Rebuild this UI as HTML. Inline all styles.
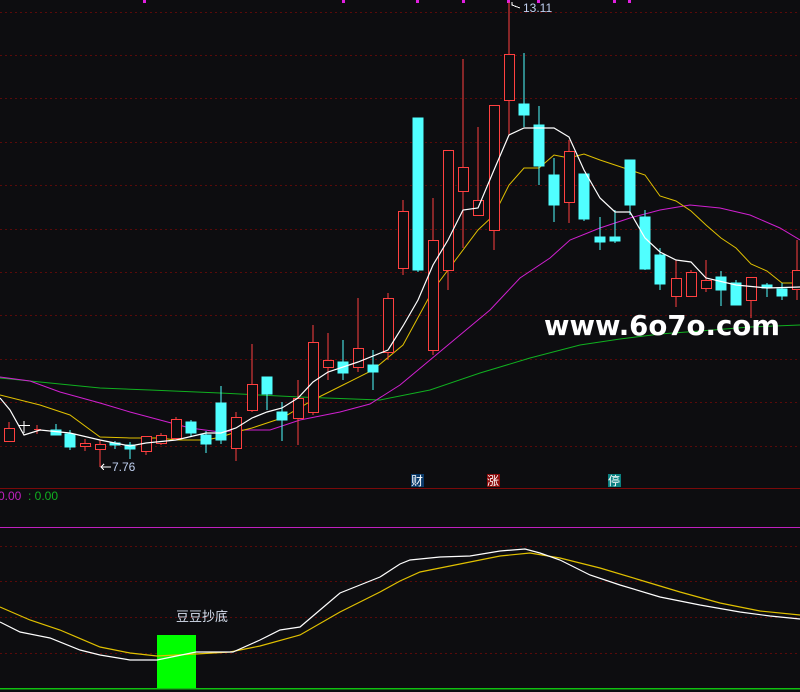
<!DOCTYPE html>
<html><head><meta charset="utf-8"><style>
html,body{margin:0;padding:0;background:#0d0d10;}
svg{display:block}
</style></head><body>
<svg width="800" height="692" xmlns="http://www.w3.org/2000/svg" shape-rendering="crispEdges">
<rect width="800" height="692" fill="#0d0d10"/>
<g stroke="#5a0a0a" stroke-dasharray="2,3" stroke-width="1">
<line x1="0" y1="12.5" x2="800" y2="12.5"/><line x1="0" y1="55.5" x2="800" y2="55.5"/><line x1="0" y1="98.5" x2="800" y2="98.5"/><line x1="0" y1="142.5" x2="800" y2="142.5"/><line x1="0" y1="185.5" x2="800" y2="185.5"/><line x1="0" y1="229.5" x2="800" y2="229.5"/><line x1="0" y1="272.5" x2="800" y2="272.5"/><line x1="0" y1="315.5" x2="800" y2="315.5"/><line x1="0" y1="359.5" x2="800" y2="359.5"/><line x1="0" y1="402.5" x2="800" y2="402.5"/><line x1="0" y1="446.5" x2="800" y2="446.5"/>
<line x1="0" y1="546.5" x2="800" y2="546.5"/><line x1="0" y1="581.5" x2="800" y2="581.5"/><line x1="0" y1="617.5" x2="800" y2="617.5"/><line x1="0" y1="653.5" x2="800" y2="653.5"/>
</g>
<line x1="0" y1="488.5" x2="800" y2="488.5" stroke="#7a0a0a"/>
<line x1="0" y1="527.5" x2="800" y2="527.5" stroke="#c020c0"/>
<line x1="0" y1="688.5" x2="800" y2="688.5" stroke="#10c010" stroke-width="1.5"/>
<g fill="#e020e0"><rect x="143" y="0" width="3" height="3"/><rect x="342" y="0" width="3" height="3"/><rect x="416" y="0" width="3" height="3"/><rect x="462" y="0" width="3" height="3"/><rect x="507" y="0" width="3" height="3"/><rect x="537" y="0" width="3" height="3"/><rect x="613" y="0" width="3" height="3"/><rect x="628" y="0" width="3" height="3"/></g>
<!-- MA lines -->
<g fill="none" stroke-width="1" shape-rendering="auto">
<polyline stroke="#10b020" points="0,378 40,382 100,388 150,390 220,393 300,397 380,400 430,390 480,373 530,358 580,345 620,339 660,334 700,331 750,327 800,325"/>
<polyline stroke="#d020d0" points="0,377 30,381 60,392 100,403 130,412 160,420 190,428 220,432 240,430 270,430 300,420 340,412 370,404 400,385 430,360 460,335 490,310 520,278 550,258 570,240 600,228 630,218 660,210 690,205 720,208 750,215 780,228 800,240"/>
<polyline stroke="#e0c000" points="0,395 40,405 70,415 100,437 130,438 160,438 176,440 206,440 221,437 236,432 252,428 282,418 313,400 343,385 373,370 403,345 433,290 448,270 478,230 494,215 509,185 524,168 539,168 554,155 569,158 584,154 600,160 630,170 645,175 660,196 676,201 691,211 706,225 721,238 736,248 751,264 767,271 782,283 800,283"/>
</g>
<!-- candles -->
<g stroke-width="1.2">
<g stroke="#ff4040" fill="#0d0d10">
<line x1="9" y1="422" x2="9" y2="442"/><rect x="4.5" y="428.5" width="10" height="13"/>
<line x1="34" y1="429.5" x2="41" y2="429.5"/><line x1="37" y1="425" x2="37" y2="434"/>
<line x1="85" y1="439" x2="85" y2="451"/><rect x="80.5" y="443.5" width="10" height="3"/>
<line x1="100" y1="440" x2="100" y2="467"/><rect x="95.5" y="444.5" width="10" height="5"/>
<line x1="146" y1="436" x2="146" y2="455"/><rect x="141.5" y="436.5" width="10" height="15"/>
<line x1="161" y1="433" x2="161" y2="445"/><rect x="156.5" y="435.5" width="10" height="8"/>
<line x1="176" y1="417" x2="176" y2="440"/><rect x="171.5" y="419.5" width="10" height="19"/>
<line x1="236" y1="412" x2="236" y2="461"/><rect x="231.5" y="417.5" width="10" height="31"/>
<line x1="252" y1="344" x2="252" y2="412"/><rect x="247.5" y="384.5" width="10" height="26"/>
<line x1="298" y1="380" x2="298" y2="445"/><rect x="293.5" y="398.5" width="10" height="20"/>
<line x1="313" y1="325" x2="313" y2="415"/><rect x="308.5" y="342.5" width="10" height="70"/>
<line x1="328" y1="333" x2="328" y2="380"/><rect x="323.5" y="360.5" width="10" height="7"/>
<line x1="358" y1="298" x2="358" y2="372"/><rect x="353.5" y="348.5" width="10" height="19"/>
<line x1="388" y1="293" x2="388" y2="360"/><rect x="383.5" y="298.5" width="10" height="54"/>
<line x1="403" y1="200" x2="403" y2="275"/><rect x="398.5" y="211.5" width="10" height="57"/>
<line x1="433" y1="198" x2="433" y2="355"/><rect x="428.5" y="240.5" width="10" height="110"/>
<line x1="448" y1="150" x2="448" y2="290"/><rect x="443.5" y="150.5" width="10" height="120"/>
<line x1="463" y1="59" x2="463" y2="248"/><rect x="458.5" y="167.5" width="10" height="24"/>
<line x1="478" y1="127" x2="478" y2="215"/><rect x="473.5" y="200.5" width="10" height="15"/>
<line x1="494" y1="105" x2="494" y2="250"/><rect x="489.5" y="105.5" width="10" height="125"/>
<line x1="509" y1="2" x2="509" y2="135"/><rect x="504.5" y="54.5" width="10" height="46"/>
<line x1="569" y1="140" x2="569" y2="223"/><rect x="564.5" y="151.5" width="10" height="51"/>
<line x1="676" y1="260" x2="676" y2="307"/><rect x="671.5" y="278.5" width="10" height="18"/>
<line x1="691" y1="270" x2="691" y2="296"/><rect x="686.5" y="272.5" width="10" height="24"/>
<line x1="706" y1="260" x2="706" y2="292"/><rect x="701.5" y="280.5" width="10" height="8"/>
<line x1="751" y1="277" x2="751" y2="318"/><rect x="746.5" y="277.5" width="10" height="23"/>
<line x1="797" y1="240" x2="797" y2="300"/><rect x="792.5" y="270.5" width="10" height="19"/>
</g>
<g stroke="#50ffff" fill="#50ffff">
<line x1="56" y1="424" x2="56" y2="435"/><rect x="51" y="430" width="10" height="5"/>
<line x1="70" y1="430" x2="70" y2="450"/><rect x="65" y="434" width="10" height="13"/>
<line x1="115" y1="441" x2="115" y2="449"/><rect x="110" y="443" width="10" height="2"/>
<line x1="130" y1="442" x2="130" y2="459"/><rect x="125" y="445" width="10" height="4"/>
<line x1="191" y1="420" x2="191" y2="436"/><rect x="186" y="422" width="10" height="11"/>
<line x1="206" y1="431" x2="206" y2="453"/><rect x="201" y="435" width="10" height="9"/>
<line x1="221" y1="386" x2="221" y2="444"/><rect x="216" y="403" width="10" height="37"/>
<line x1="267" y1="377" x2="267" y2="410"/><rect x="262" y="377" width="10" height="17"/>
<line x1="282" y1="402" x2="282" y2="441"/><rect x="277" y="412" width="10" height="8"/>
<line x1="343" y1="340" x2="343" y2="380"/><rect x="338" y="362" width="10" height="11"/>
<line x1="373" y1="350" x2="373" y2="390"/><rect x="368" y="365" width="10" height="7"/>
<line x1="418" y1="118" x2="418" y2="272"/><rect x="413" y="118" width="10" height="152"/>
<line x1="524" y1="53" x2="524" y2="127"/><rect x="519" y="104" width="10" height="11"/>
<line x1="539" y1="106" x2="539" y2="185"/><rect x="534" y="125" width="10" height="41"/>
<line x1="554" y1="158" x2="554" y2="222"/><rect x="549" y="175" width="10" height="30"/>
<line x1="584" y1="174" x2="584" y2="221"/><rect x="579" y="174" width="10" height="45"/>
<line x1="600" y1="217" x2="600" y2="250"/><rect x="595" y="237" width="10" height="5"/>
<line x1="615" y1="210" x2="615" y2="243"/><rect x="610" y="237" width="10" height="4"/>
<line x1="630" y1="160" x2="630" y2="215"/><rect x="625" y="160" width="10" height="45"/>
<line x1="645" y1="210" x2="645" y2="270"/><rect x="640" y="217" width="10" height="52"/>
<line x1="660" y1="248" x2="660" y2="290"/><rect x="655" y="255" width="10" height="29"/>
<line x1="721" y1="271" x2="721" y2="306"/><rect x="716" y="277" width="10" height="13"/>
<line x1="736" y1="280" x2="736" y2="305"/><rect x="731" y="283" width="10" height="22"/>
<line x1="767" y1="283" x2="767" y2="297"/><rect x="762" y="285" width="10" height="3"/>
<line x1="782" y1="283" x2="782" y2="300"/><rect x="777" y="289" width="10" height="7"/>
</g>
<g stroke="#ffffff"><line x1="19" y1="425.5" x2="30" y2="425.5"/><line x1="24" y1="421" x2="24" y2="433"/></g>
</g>
<polyline fill="none" stroke="#ffffff" stroke-width="1.2" shape-rendering="auto" points="0,398 10,410 24,435 40,430 70,433 100,440 130,446 146,443 176,440 206,433 221,433 236,428 252,418 267,412 282,408 298,398 313,382 328,372 358,362 388,350 403,326 418,300 433,265 448,240 463,210 478,208 494,170 509,135 524,128 554,128 569,137 584,170 600,198 615,212 630,212 645,238 660,252 676,260 691,262 706,278 736,285 767,288 800,287"/>
<!-- labels -->
<g font-family="Liberation Sans, sans-serif" font-size="12">
<text x="523" y="12" fill="#c0d0f0">13.11</text>
<polyline points="520,8 512,5 512,2" fill="none" stroke="#fff"/>
<text x="112" y="471" fill="#c0d0f0">7.76</text>
<line x1="101" y1="467" x2="111" y2="467" stroke="#fff"/><polyline points="104,464 101,467 104,470" fill="none" stroke="#fff"/>
<text x="-2" y="500" fill="#c020c0">0.00</text><text x="28" y="500" fill="#10b020">: 0.00</text>
</g>
<rect x="411" y="474" width="13" height="13" fill="#0a3a6a"/><rect x="487" y="474" width="13" height="13" fill="#8a0a0a"/><rect x="608" y="474" width="13" height="13" fill="#0a8080"/>
<g font-family="Liberation Sans, Noto Sans CJK SC, sans-serif" font-size="12" fill="#fff">
<text x="411" y="485">财</text><text x="487" y="485">涨</text><text x="608" y="485">停</text>
</g>
<text x="544" y="335" font-family="DejaVu Sans, sans-serif" font-weight="bold" font-size="28" fill="#fff" textLength="236" lengthAdjust="spacingAndGlyphs">www.6o7o.com</text>
<!-- lower indicator -->
<rect x="157" y="635" width="39" height="53" fill="#00ff00"/>
<g fill="none" stroke-width="1.2" shape-rendering="auto">
<polyline stroke="#e0c000" points="0,607 30,620 60,630 100,647 130,653 157,656 196,654 230,652 260,646 300,635 340,612 380,592 400,581 420,572 460,564 500,556 530,553 560,558 600,568 640,580 680,592 720,603 760,611 800,615"/>
<polyline stroke="#ffffff" points="0,622 20,632 50,638 80,650 100,655 130,660 157,660 196,652 215,652 233,652 260,640 280,630 300,627 320,610 340,593 360,585 380,577 400,564 410,560 440,557 470,556 500,551 525,549 540,553 560,560 590,575 620,585 660,597 700,605 740,612 770,616 800,619"/>
</g>
<text x="176" y="621" font-family="Liberation Sans, Noto Sans CJK SC, sans-serif" font-size="13" fill="#d8e0f0">豆豆抄底</text>
</svg>
</body></html>
